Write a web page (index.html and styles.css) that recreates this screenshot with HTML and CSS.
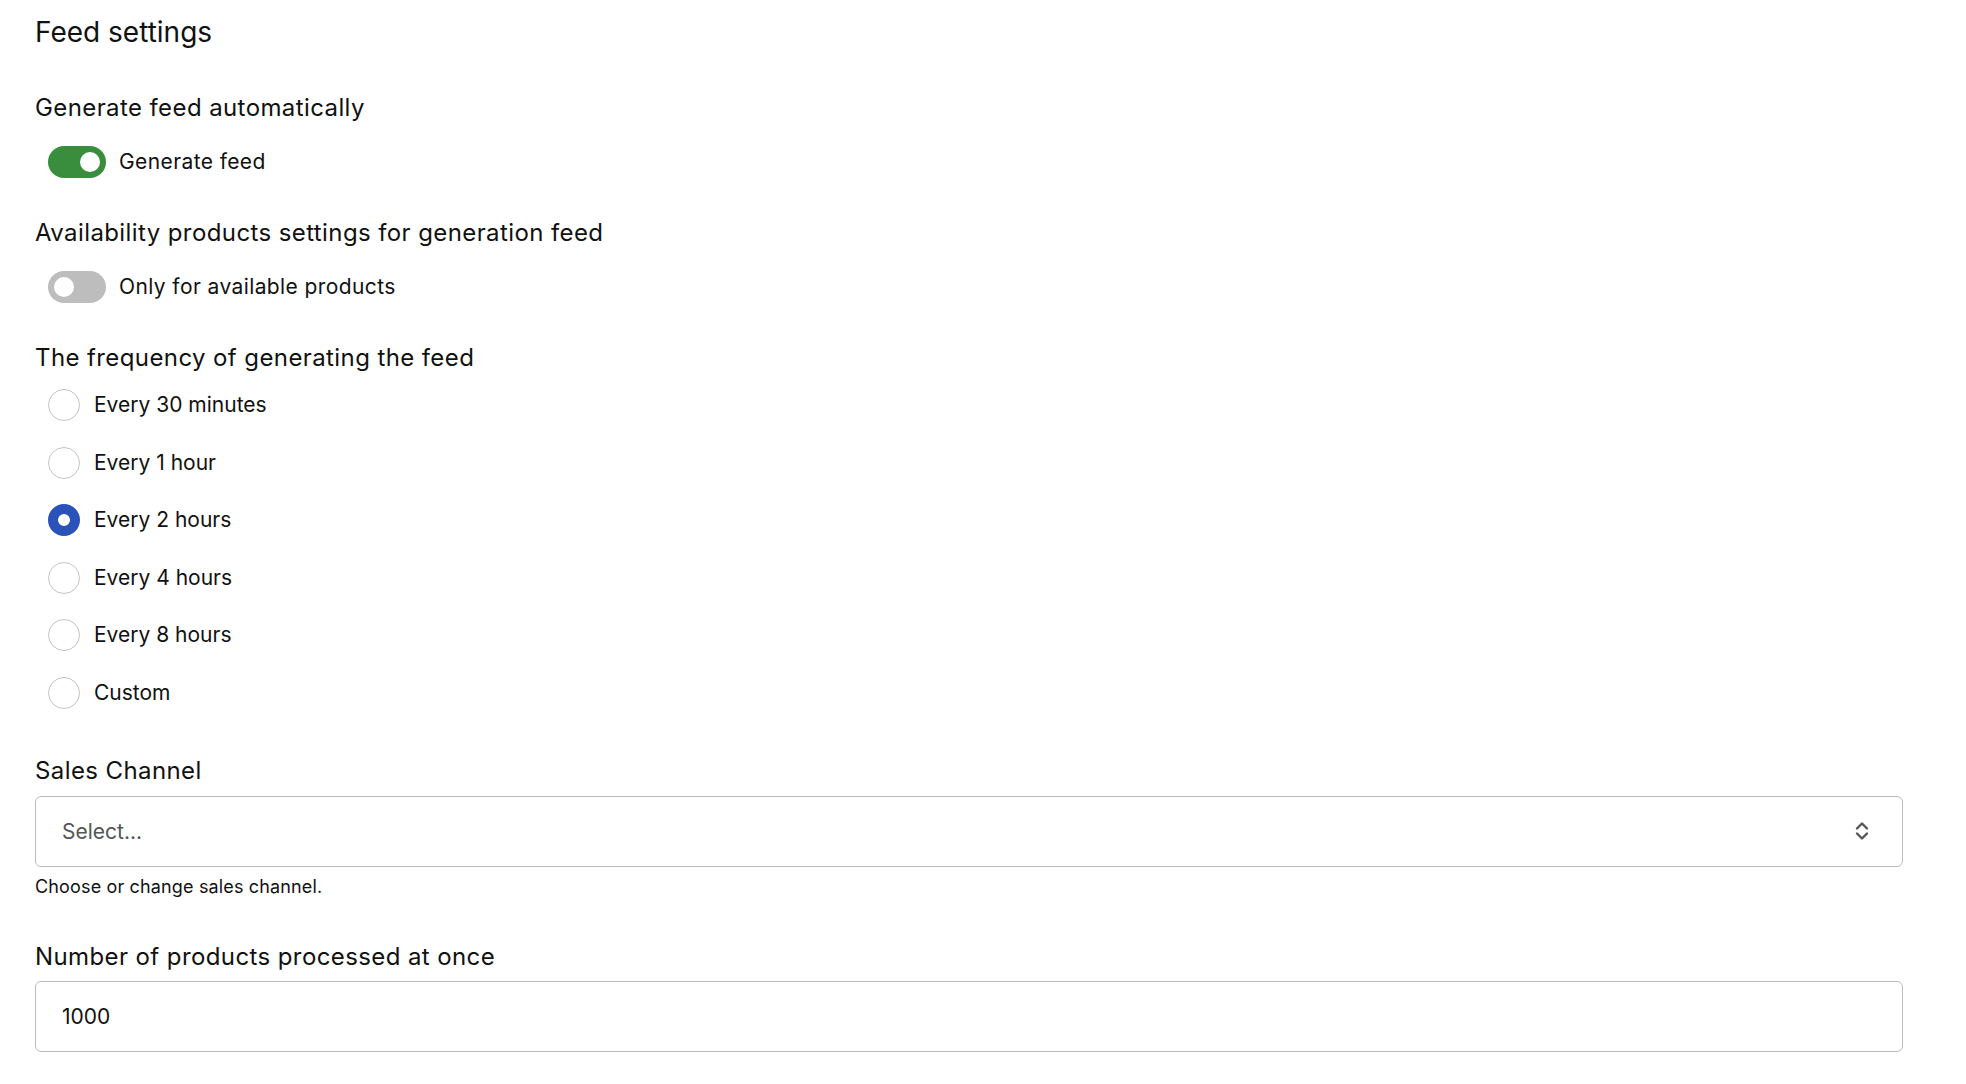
FILE: index.html
```html
<!DOCTYPE html>
<html lang="en">
<head>
    <meta charset="UTF-8">
    <meta name="viewport" content="width=device-width, initial-scale=1.0">
    <title>Feed settings</title>
    <link rel="stylesheet" href="styles.css">
</head>
<body>
    <div class="settings">
        <h1>Feed settings</h1>

        <div class="section">
            <h2>Generate feed automatically</h2>
            <label class="switch-row">
                <input type="checkbox" class="switch" checked>
                <span>Generate feed</span>
            </label>
        </div>

        <div class="section">
            <h2>Availability products settings for generation feed</h2>
            <label class="switch-row">
                <input type="checkbox" class="switch">
                <span>Only for available products</span>
            </label>
        </div>

        <div class="section">
            <h2>The frequency of generating the feed</h2>
            <div class="radio-list">
                <label class="radio-row"><input type="radio" name="frequency" value="30m"><span>Every 30 minutes</span></label>
                <label class="radio-row"><input type="radio" name="frequency" value="1h"><span>Every 1 hour</span></label>
                <label class="radio-row"><input type="radio" name="frequency" value="2h" checked><span>Every 2 hours</span></label>
                <label class="radio-row"><input type="radio" name="frequency" value="4h"><span>Every 4 hours</span></label>
                <label class="radio-row"><input type="radio" name="frequency" value="8h"><span>Every 8 hours</span></label>
                <label class="radio-row"><input type="radio" name="frequency" value="custom"><span>Custom</span></label>
            </div>
        </div>

        <div class="section section-wide">
            <h2 class="field-label">Sales Channel</h2>
            <div class="select-box">
                <span class="placeholder">Select...</span>
                <svg class="chevrons" width="14" height="20" viewBox="0 0 14 20" fill="none" stroke="#555" stroke-width="2.4" stroke-linecap="round" stroke-linejoin="round">
                    <path d="M2 7.5 L7 2.5 L12 7.5"/>
                    <path d="M2 12.5 L7 17.5 L12 12.5"/>
                </svg>
            </div>
            <p class="help">Choose or change sales channel.</p>
        </div>

        <div class="section section-number">
            <h2 class="field-label">Number of products processed at once</h2>
            <input type="text" class="text-input" value="1000">
        </div>
    </div>
</body>
</html>
```

FILE: styles.css
```css
* {
    margin: 0;
    padding: 0;
    box-sizing: border-box;
}

body {
    font-family: Inter, "Noto Sans", sans-serif;
    color: #111;
    background: #fff;
}

.settings {
    padding: 14px 63px 0 35px;
}

h1 {
    font-size: 28px;
    font-weight: 400;
    line-height: 36px;
    margin-bottom: 42px;
}

h2 {
    font-size: 24px;
    font-weight: 400;
    line-height: 32px;
    letter-spacing: 0.4px;
}

.section {
    margin-bottom: 39px;
}

.section h2 {
    margin-bottom: 22px;
}

/* toggle switches */
.switch-row {
    display: flex;
    align-items: center;
    gap: 13px;
    padding-left: 13px;
    font-size: 21px;
    line-height: 32px;
    letter-spacing: 0.4px;
    cursor: pointer;
}

.switch {
    appearance: none;
    width: 58px;
    height: 32px;
    border-radius: 16px;
    background: #bdbdbd;
    position: relative;
    cursor: pointer;
    flex-shrink: 0;
}

.switch::after {
    content: "";
    position: absolute;
    top: 6px;
    left: 6px;
    width: 20px;
    height: 20px;
    border-radius: 50%;
    background: #fff;
}

.switch:checked {
    background: #388e3c;
}

.switch:checked::after {
    left: 32px;
}

/* radio list */
.radio-list {
    display: flex;
    flex-direction: column;
    gap: 25.6px;
    padding-left: 13px;
}

.section .radio-list {
    margin-top: -7px;
}

.radio-row {
    display: flex;
    align-items: center;
    gap: 14px;
    font-size: 21px;
    line-height: 32px;
    cursor: pointer;
}

.radio-row input {
    appearance: none;
    width: 32px;
    height: 32px;
    border-radius: 50%;
    border: 1.5px solid #c4c4c4;
    background: #fff;
    flex-shrink: 0;
    cursor: pointer;
}

.radio-row input:checked {
    border: 10px solid #2a52b8;
}

.section-wide {
    margin-top: 46px;
    margin-bottom: 43px;
}

.section .field-label {
    margin-bottom: 9px;
}

/* select and text inputs */
.select-box,
.text-input {
    display: flex;
    align-items: center;
    justify-content: space-between;
    width: 100%;
    height: 71px;
    padding: 0 33px 0 26px;
    border: 1.5px solid #bcbcbc;
    border-radius: 6px;
    background: #fff;
    font-family: inherit;
    font-size: 21px;
    color: #111;
}

.placeholder {
    color: #555;
}

.help {
    font-size: 18px;
    line-height: 22px;
    letter-spacing: 0.15px;
    margin-top: 9px;
}

.section-number .field-label {
    margin-bottom: 8px;
}
```
